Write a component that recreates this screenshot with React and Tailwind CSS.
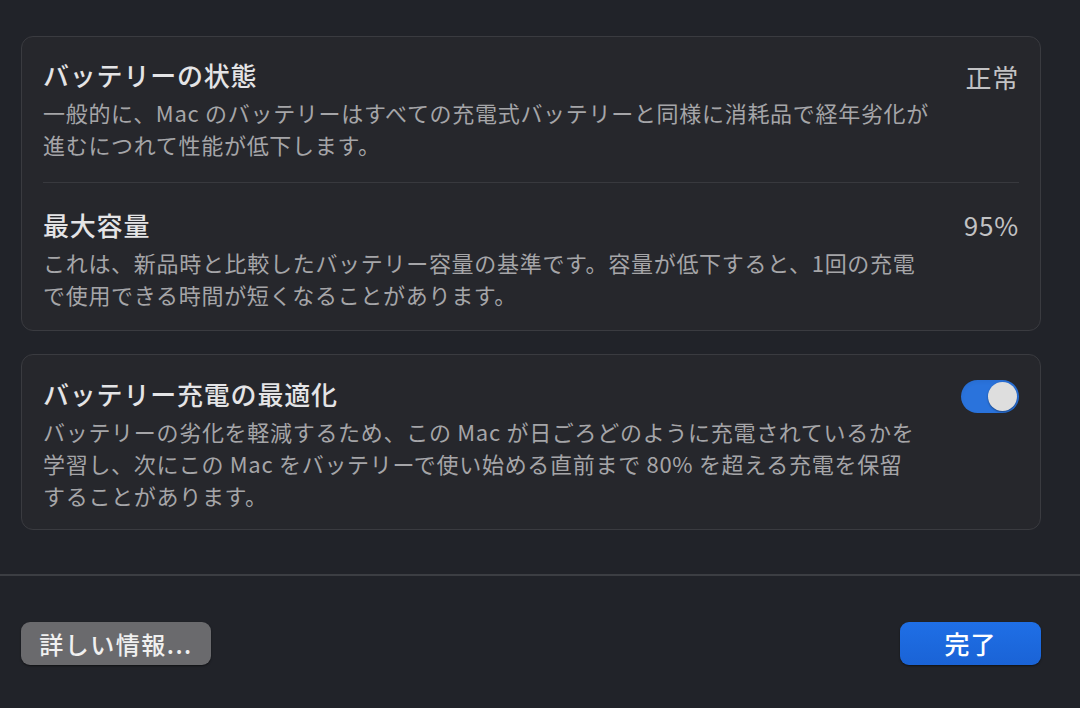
import React, { useState } from "react";

const font = { fontFamily: '"Noto Sans CJK JP", "Noto Sans", sans-serif' };

const Row = ({ title, value, children }) => (
  <div className="flex items-start justify-between">
    <div className="flex flex-col gap-[4px]">
      <p className="text-[26px] leading-[34px] font-medium tracking-[0.8px] text-[#e4e4e6]">{title}</p>
      <p className="text-[22px] leading-[32px] tracking-[0.7px] text-[#a5a5a8] whitespace-nowrap">{children}</p>
    </div>
    {value}
  </div>
);

const Toggle = ({ on, onChange }) => (
  <button
    onClick={() => onChange(!on)}
    className={`mt-[3px] w-[58px] h-[33px] rounded-full p-[2px] flex items-center shadow-inner ${
      on ? "bg-[#2a73dc] justify-end" : "bg-[#4a4b50] justify-start"
    }`}
  >
    <span className="block w-[29px] h-[29px] rounded-full bg-[#dedede] shadow-[0_1px_2px_rgba(0,0,0,0.4)]" />
  </button>
);

export default function App() {
  const [optimize, setOptimize] = useState(true);

  return (
    <div className="w-[1080px] h-[708px] bg-[#212329] flex flex-col overflow-hidden" style={font}>
      <div className="flex flex-col gap-[23px] pl-[21px] pr-[39px] pt-[36px]">
        {/* Battery health card */}
        <div className="rounded-[12px] border border-[#3a3b40] bg-[#26272c] px-[21px] pt-[21px] pb-[20px]">
          <Row
            title="バッテリーの状態"
            value={<span className="text-[26px] leading-[34px] tracking-[0.8px] text-[#c2c2c4] mt-[2px]">正常</span>}
          >
            一般的に、Mac のバッテリーはすべての充電式バッテリーと同様に消耗品で経年劣化が
            <br />
            進むにつれて性能が低下します。
          </Row>
          <div className="h-px bg-[#38393e] mt-[22px] mb-[25px]" />
          <Row
            title="最大容量"
            value={<span className="text-[26px] leading-[34px] tracking-[0.8px] text-[#c2c2c4]">95%</span>}
          >
            これは、新品時と比較したバッテリー容量の基準です。容量が低下すると、1回の充電
            <br />
            で使用できる時間が短くなることがあります。
          </Row>
        </div>

        {/* Optimized charging card */}
        <div className="rounded-[12px] border border-[#3a3b40] bg-[#26272c] px-[21px] pt-[22px] pb-[18px]">
          <Row title="バッテリー充電の最適化" value={<Toggle on={optimize} onChange={setOptimize} />}>
            バッテリーの劣化を軽減するため、この Mac が日ごろどのように充電されているかを
            <br />
            学習し、次にこの Mac をバッテリーで使い始める直前まで 80% を超える充電を保留
            <br />
            することがあります。
          </Row>
        </div>
      </div>

      <div className="mt-[44px] h-[2px] bg-[#3c3e43]" />

      <div className="flex items-center justify-between pl-[21px] pr-[39px] pt-[46px]">
        <button className="w-[190px] h-[43px] rounded-[9px] bg-[#6a6a6d] text-[24px] leading-none tracking-[1.5px] text-[#f0f0f0] font-medium shadow-[0_1px_2px_rgba(0,0,0,0.5)]">
          詳しい情報...
        </button>
        <button className="w-[141px] h-[43px] rounded-[9px] bg-gradient-to-b from-[#1f6fe6] to-[#1a63d6] text-[25px] leading-none tracking-[1px] text-white font-medium shadow-[0_1px_2px_rgba(0,0,0,0.5)]">
          完了
        </button>
      </div>
    </div>
  );
}
